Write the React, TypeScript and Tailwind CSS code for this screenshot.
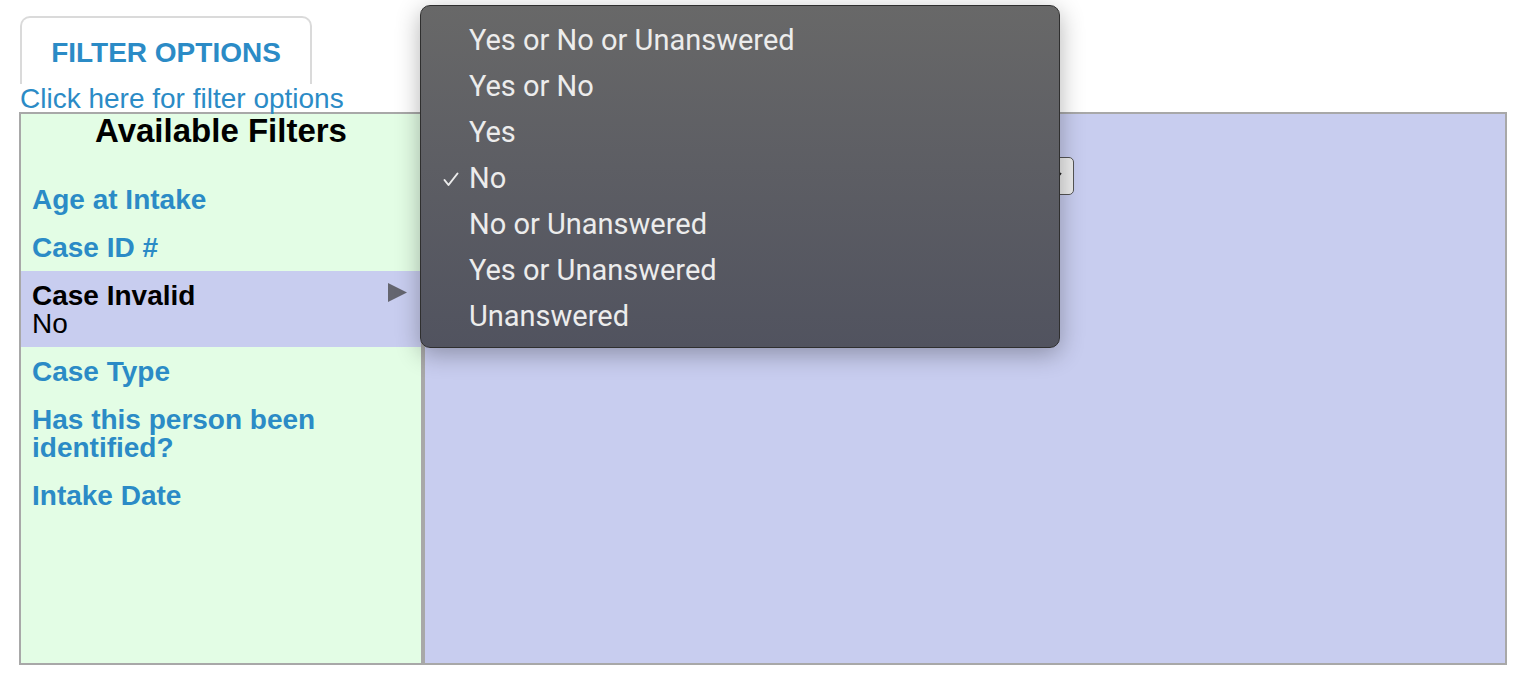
import React from 'react';

const filters: { label: string; value?: string; selected?: boolean }[] = [
    { label: 'Age at Intake' },
    { label: 'Case ID #' },
    { label: 'Case Invalid', value: 'No', selected: true },
    { label: 'Case Type' },
    { label: 'Has this person been identified?' },
    { label: 'Intake Date' },
];

const options = [
    'Yes or No or Unanswered',
    'Yes or No',
    'Yes',
    'No',
    'No or Unanswered',
    'Yes or Unanswered',
    'Unanswered',
];

const FilterRow: React.FC<{ label: string; value?: string; selected?: boolean }> = ({ label, value, selected }) => {
    if (selected) {
        return (
            <div className="flex items-start justify-between bg-[#c8cdef] pb-[9px] pl-[11px] pr-[14px] pt-[11px]">
                <div className="text-[28px] leading-[28px] text-black">
                    <div className="font-bold">{label}</div>
                    <div>{value}</div>
                </div>
                <svg width="19" height="19" viewBox="0 0 19 19" className="mt-[1px]">
                    <polygon points="0,0 19,9.5 0,19" fill="#64656f" />
                </svg>
            </div>
        );
    }
    return (
        <div className="pb-[9px] pl-[11px] pr-[40px] pt-[11px] text-[28px] font-bold leading-[28px] text-[#2b8bc6]">
            {label}
        </div>
    );
};

export default function App() {
    return (
        <div className="relative h-[686px] w-[1536px] overflow-hidden bg-white font-['Liberation_Sans',Arial,sans-serif]">
            <div className="pl-[19px] pt-[16px]">
                <div className="ml-[1px] flex h-[68px] w-[292px] justify-center rounded-t-[10px] border-2 border-b-0 border-[#dadada] pt-[21px]">
                    <span className="text-[28px] font-bold leading-[28px] text-[#2b8bc6]">FILTER OPTIONS</span>
                </div>
                <div className="ml-[1px] pt-[1px] text-[28px] leading-[27px] text-[#2b8bc6]">Click here for filter options</div>

                <div className="flex h-[553px] w-[1488px] border-2 border-[#a8a8a8]">
                    <div className="w-[404px] border-r-[4px] border-[#a8a8a8] bg-[#e3fde5]">
                        <h3 className="mb-[28px] mt-[1px] text-center text-[33px] font-bold leading-[32px] text-black">
                            Available Filters
                        </h3>
                        {filters.map((f) => (
                            <FilterRow key={f.label} {...f} />
                        ))}
                    </div>
                    <div className="flex-1 bg-[#c8cdef] pl-[15px] pt-[43px]">
                        <div className="flex h-[38px] w-[634px] items-center justify-end rounded-[5px] border border-[#555] bg-[#ececec] pr-[7px]">
                            <svg width="14" height="10" viewBox="0 0 14 10">
                                <polyline points="1,2 5,7 9,2" fill="none" stroke="#222" strokeWidth="1.8" />
                            </svg>
                        </div>
                    </div>
                </div>
            </div>

            {/* native select popup */}
            <div className="absolute left-[420px] top-[5px] h-[343px] w-[640px] rounded-[10px] border border-[#2f2f2f] bg-linear-to-b from-[#686868] to-[#51535f] pt-[12px] shadow-[0_6px_24px_rgba(0,0,0,0.3)]">
                {options.map((o) => (
                    <div key={o} className="relative flex h-[46px] items-center pl-[48px] font-['Roboto',sans-serif] text-[29px] text-[#ececec]">
                        {o === 'No' && (
                            <svg width="16" height="15" viewBox="0 0 16 15" className="absolute left-[22px] top-[16px]">
                                <polyline points="1.5,8 5.5,13 14.5,1.5" fill="none" stroke="#ececec" strokeWidth="2" strokeLinecap="round" strokeLinejoin="round" />
                            </svg>
                        )}
                        {o}
                    </div>
                ))}
            </div>
        </div>
    );
}
